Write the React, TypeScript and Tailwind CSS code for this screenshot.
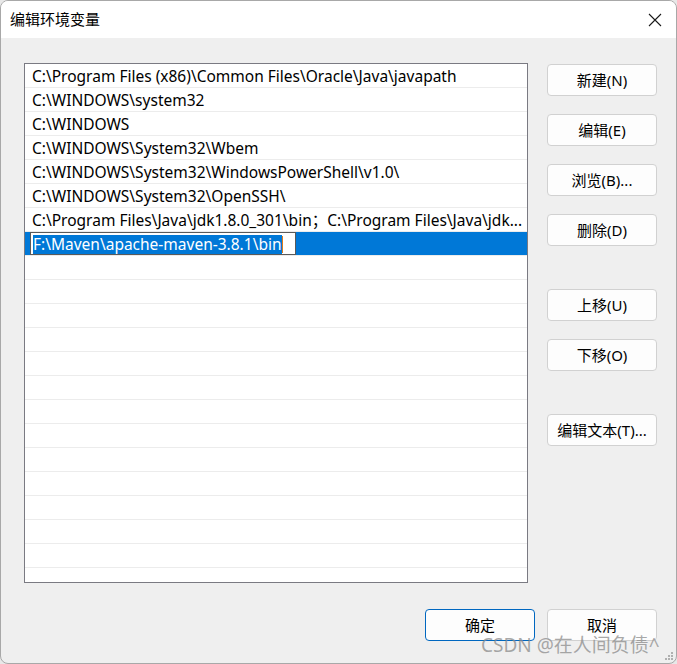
import React from "react";

const FONT = { fontFamily: '"Noto Sans", "Noto Sans CJK SC", sans-serif' };

const paths = [
  "C:\\Program Files (x86)\\Common Files\\Oracle\\Java\\javapath",
  "C:\\WINDOWS\\system32",
  "C:\\WINDOWS",
  "C:\\WINDOWS\\System32\\Wbem",
  "C:\\WINDOWS\\System32\\WindowsPowerShell\\v1.0\\",
  "C:\\WINDOWS\\System32\\OpenSSH\\",
  "C:\\Program Files\\Java\\jdk1.8.0_301\\bin；C:\\Program Files\\Java\\jdk...",
];

const EMPTY_ROWS = 14;

const Btn = ({ label, primary }: { label: string; primary?: boolean }) => (
  <button
    className={
      primary
        ? "w-[110px] h-[32px] rounded-[4px] border border-[#0067c0] bg-[#fdfdfd] text-[15px] text-black"
        : "w-[110px] h-[32px] rounded-[4px] border border-[#d1d1d1] bg-[#fdfdfd] text-[15px] text-black"
    }
  >
    {label}
  </button>
);

export default function App() {
  return (
    <div className="w-[677px] h-[664px] bg-[#e8e8e8]" style={FONT}>
      <div className="relative w-[677px] h-[664px] rounded-[8px] border border-[#a8a8a8] bg-[#efefef] overflow-hidden">
        {/* title bar */}
        <div className="h-[37px] bg-white flex items-center justify-between pl-[9px] pr-[14px]">
          <span className="text-[15px] text-black">编辑环境变量</span>
          <svg width="14" height="14" viewBox="0 0 14 14">
            <path d="M1 1 L13 13 M13 1 L1 13" stroke="#1a1a1a" strokeWidth="1.1" />
          </svg>
        </div>

        {/* body */}
        <div className="flex pl-[23px] pt-[25px]">
          <div className="w-[504px] h-[520px] border border-[#7a7a82] bg-white overflow-hidden">
            {paths.map((p) => (
              <div
                key={p}
                className="h-[24px] border-b border-[#ececec] pl-[7px] pt-[3px] flex items-center text-[15.5px] text-black whitespace-nowrap overflow-hidden"
              >
                {p}
              </div>
            ))}
            <div className="h-[24px] bg-[#0078d7] pl-[5px] flex items-center border-b border-[#ececec]">
              <div className="w-[266px] h-[23px] border border-[#5a5a5a] bg-white flex items-center pl-[2px] pt-[1px]">
                <span className="bg-[#0078d7] text-white text-[15.5px] leading-[19px] whitespace-nowrap">
                  F:\Maven\apache-maven-3.8.1\bin
                </span>
                <span className="w-[1px] h-[17px] bg-[#e07b1a]" />
              </div>
            </div>
            {Array.from({ length: EMPTY_ROWS }).map((_, i) => (
              <div key={i} className="h-[24px] border-b border-[#ececec]" />
            ))}
          </div>

          <div className="ml-[19px] pt-[1px] flex flex-col">
            <div className="flex flex-col gap-[18px]">
              <Btn label="新建(N)" />
              <Btn label="编辑(E)" />
              <Btn label="浏览(B)..." />
              <Btn label="删除(D)" />
            </div>
            <div className="flex flex-col gap-[18px] mt-[43px]">
              <Btn label="上移(U)" />
              <Btn label="下移(O)" />
            </div>
            <div className="mt-[43px]">
              <Btn label="编辑文本(T)..." />
            </div>
          </div>
        </div>

        {/* footer */}
        <div className="flex justify-end gap-[12px] pr-[19px] pt-[26px]">
          <Btn label="确定" primary />
          <Btn label="取消" />
        </div>

        {/* watermark */}
        <div className="absolute left-[480px] top-[630px] text-[19px] text-[#8c8c8c]/75 whitespace-nowrap">
          CSDN @在人间负债^
        </div>

        {/* resize grip */}
        <svg className="absolute right-[2px] bottom-[2px]" width="10" height="10" viewBox="0 0 10 10">
          <rect x="7" y="1" width="2" height="2" fill="#b0b0b0" />
          <rect x="4" y="4" width="2" height="2" fill="#b0b0b0" />
          <rect x="7" y="4" width="2" height="2" fill="#b0b0b0" />
          <rect x="1" y="7" width="2" height="2" fill="#b0b0b0" />
          <rect x="4" y="7" width="2" height="2" fill="#b0b0b0" />
          <rect x="7" y="7" width="2" height="2" fill="#b0b0b0" />
        </svg>
      </div>
    </div>
  );
}
